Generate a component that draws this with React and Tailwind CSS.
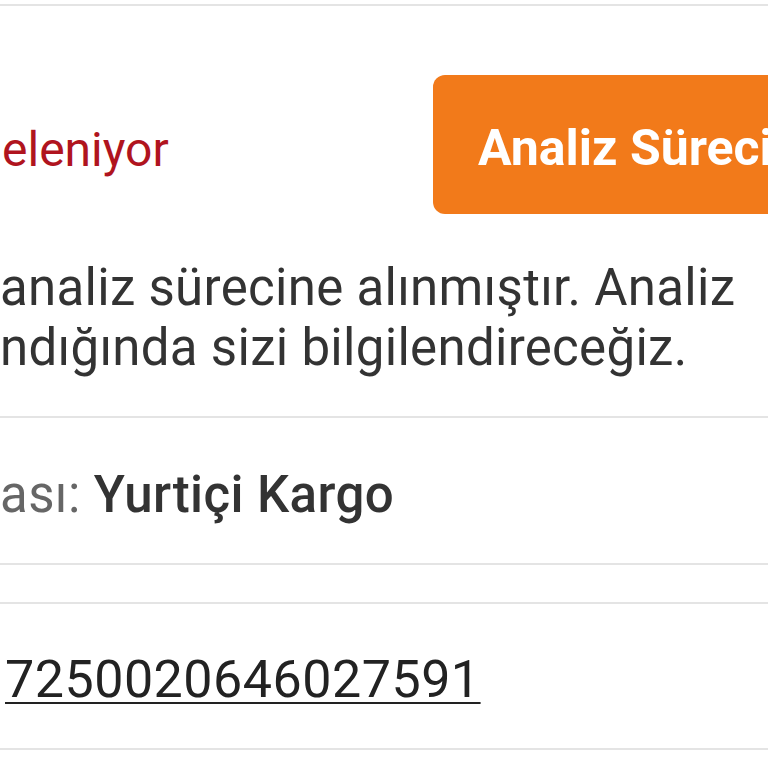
export default function App() {
  return (
    <div
      className="w-[768px] h-[768px] overflow-hidden bg-white"
      style={{ fontFamily: "Roboto, 'Noto Sans', sans-serif" }}
    >
      <div className="mt-[4px] h-[2px] bg-[#e4e4e4]" />

      <div className="flex items-start pt-[69px]">
        <div className="w-[433px] shrink-0 mt-[45px] pl-[2px] text-[48px] leading-[60px] text-[#b0141e]">
          eleniyor
        </div>
        <div className="w-[420px] shrink-0 h-[139px] rounded-l-[12px] bg-[#f27a1a] pl-[45px] pt-[43px] text-[50px] leading-[60px] font-bold text-white whitespace-nowrap">
          Analiz Sürecinde
        </div>
      </div>

      <div className="mt-[44px] text-[51px] tracking-[0.3px] leading-[60px] text-[#333333] whitespace-nowrap">
        <div>analiz sürecine alınmıştır. Analiz</div>
        <div>ndığında sizi bilgilendireceğiz.</div>
      </div>

      <div className="mt-[38px] h-[2px] bg-[#e4e4e4]" />

      <div className="mt-[47px] text-[51px] tracking-[0.4px] leading-[60px] whitespace-nowrap">
        <span className="text-[#666666]">ası: </span>
        <span className="font-medium text-[#333333]">Yurtiçi Kargo</span>
      </div>

      <div className="mt-[38px] h-[2px] bg-[#e4e4e4]" />
      <div className="mt-[37px] h-[2px] bg-[#e4e4e4]" />

      <div className="mt-[46px] pl-[5px] text-[52px] tracking-[0.5px] leading-[60px] text-[#222222] whitespace-nowrap">
        <span className="underline decoration-[2px] underline-offset-[5px]">7250020646027591</span>
      </div>

      <div className="mt-[38px] h-[2px] bg-[#e4e4e4]" />
    </div>
  );
}
